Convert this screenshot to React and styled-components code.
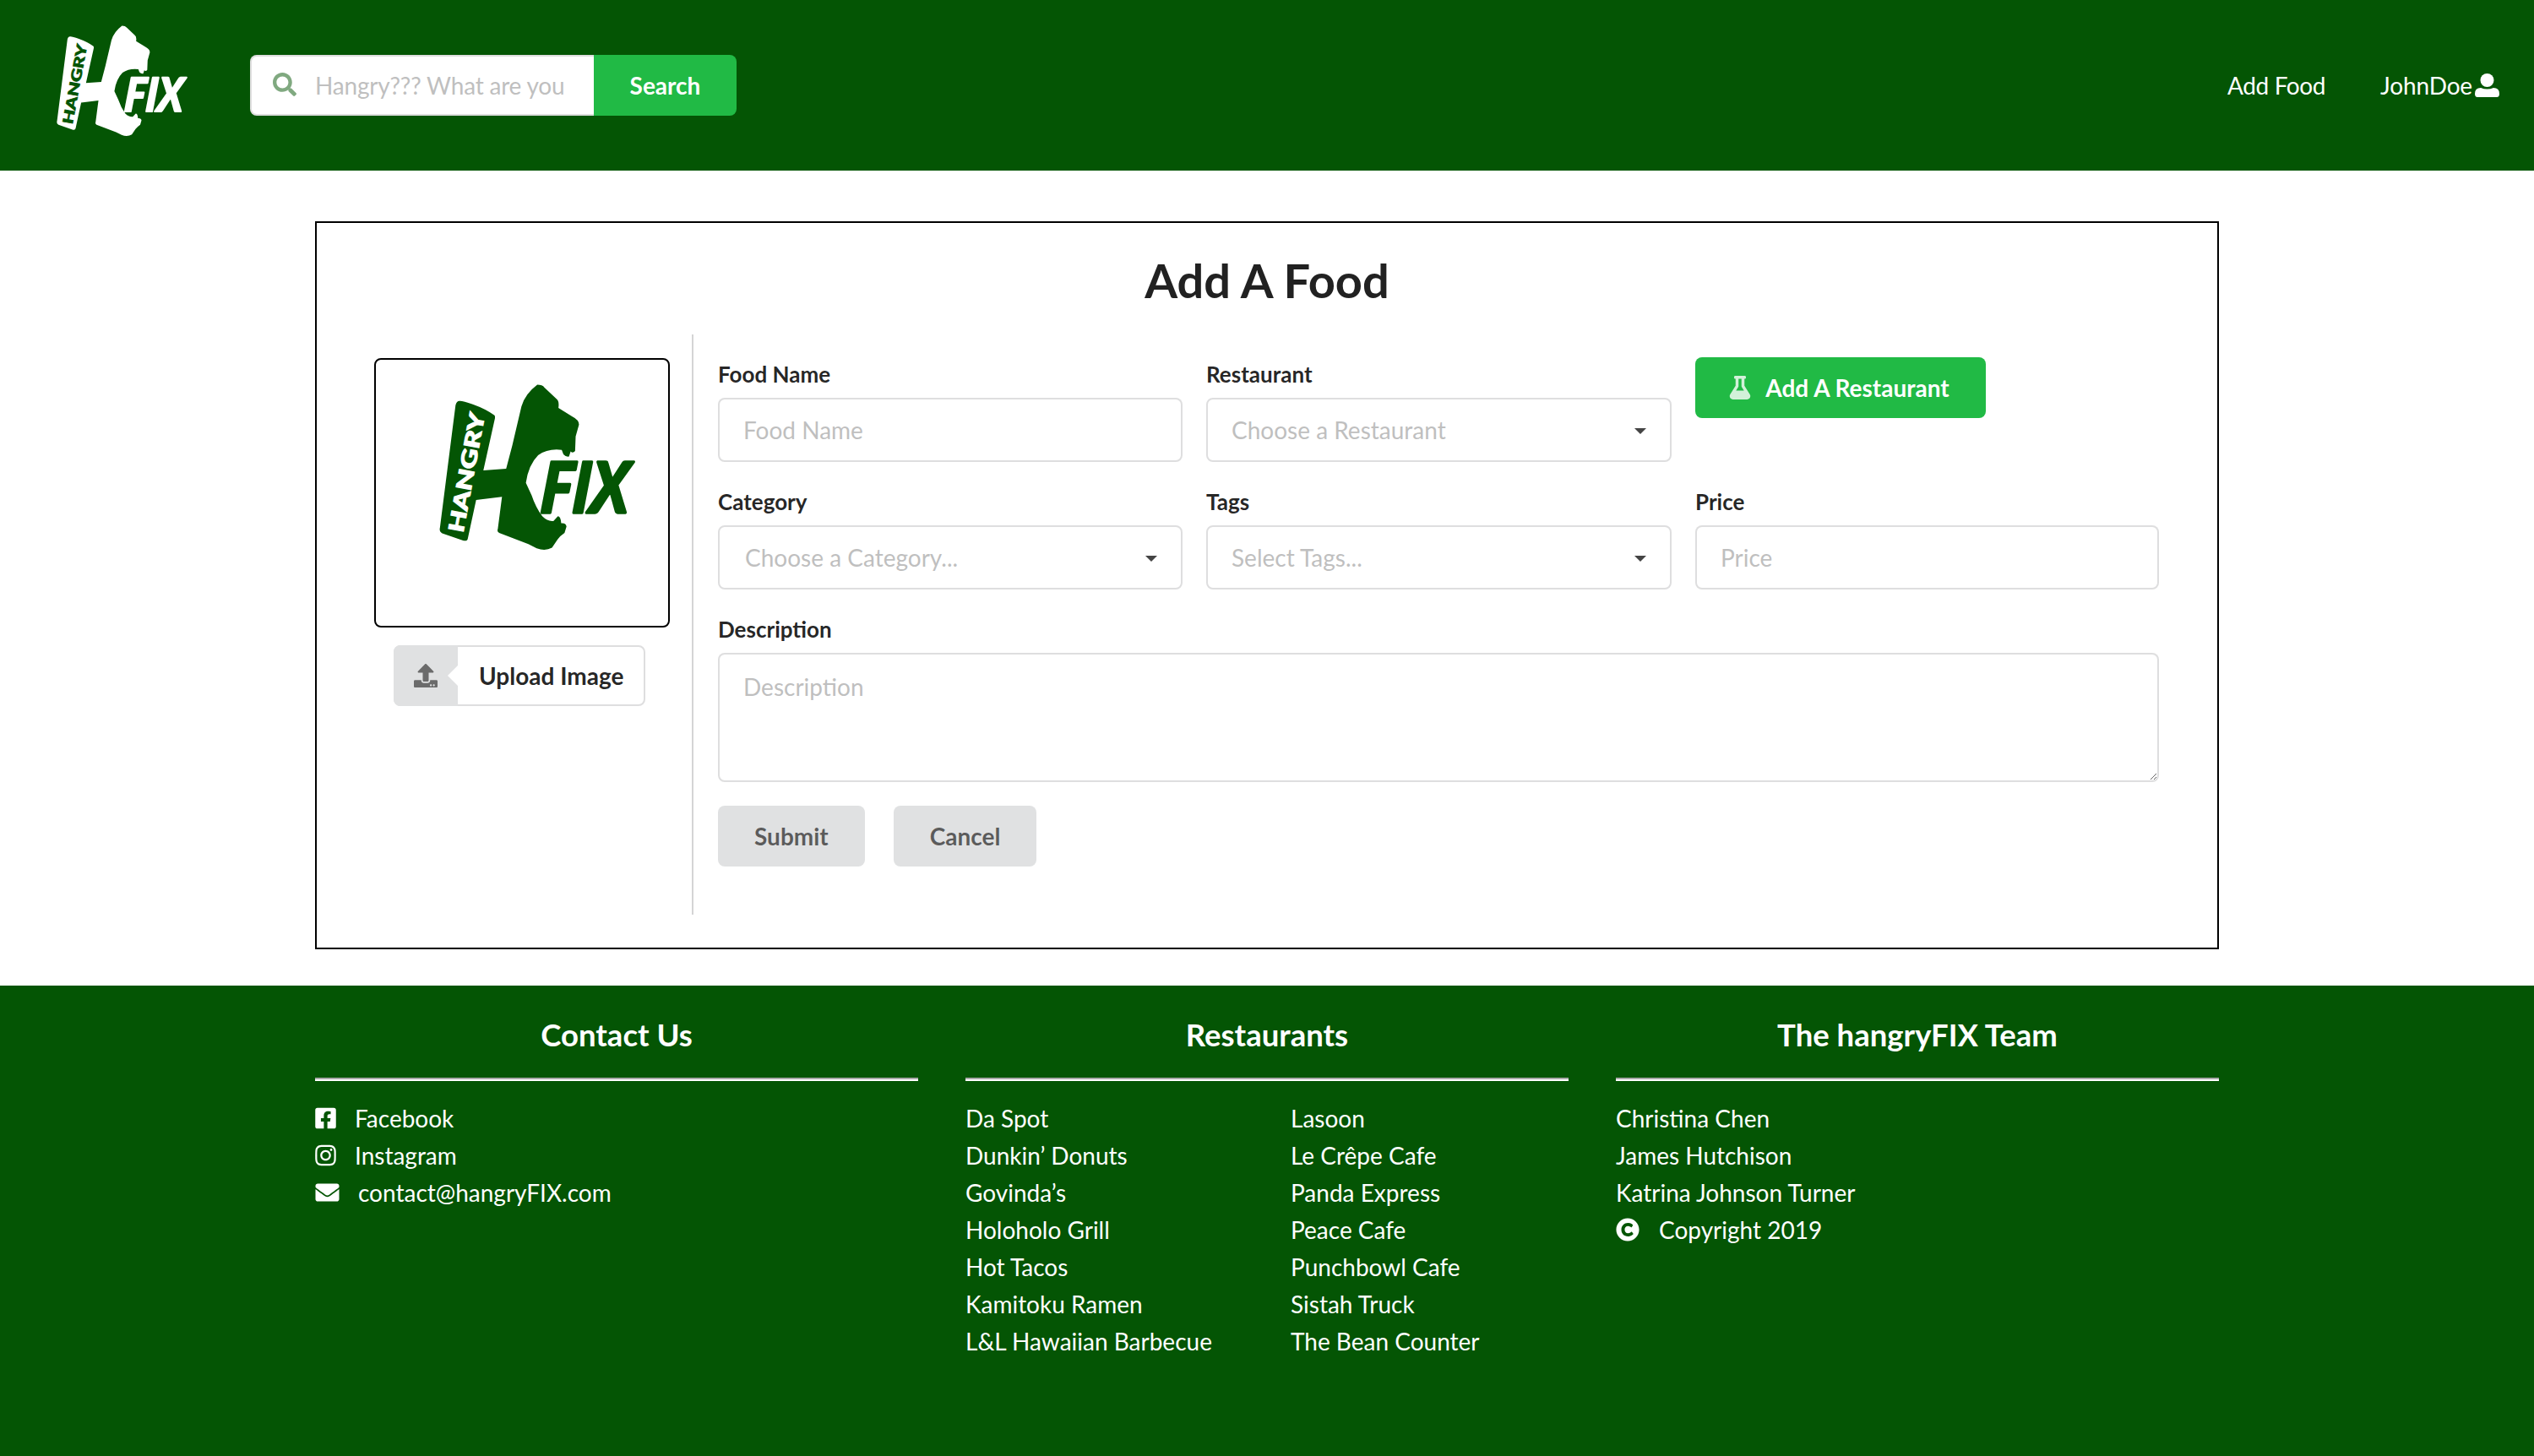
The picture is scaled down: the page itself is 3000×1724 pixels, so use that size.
import React from "react";
import styled, { createGlobalStyle } from "styled-components";
import { FaSearch, FaFlask, FaUpload, FaFacebookSquare, FaInstagram, FaEnvelope, FaCopyright } from "react-icons/fa";

const Global = createGlobalStyle`
  html, body { margin: 0; padding: 0; background: #fff; }
  body { font-family: Lato, "Liberation Sans", sans-serif; font-size: 28px; line-height: 40px; color: rgba(0,0,0,.87); }
  * { box-sizing: border-box; }
  input::placeholder, textarea::placeholder { color: #bfbfbf; opacity: 1; }
`;

const GREEN = "#045504";

const Page = styled.div`
  width: 3000px;
  height: 1724px;
  display: flex;
  flex-direction: column;
  overflow: hidden;
`;

/* Header */
const Header = styled.header`
  height: 202px;
  flex: none;
  background: ${GREEN};
  display: flex;
  align-items: center;
  padding: 0 41px 0 66px;
`;
const HeaderLogo = styled.svg`
  width: 167px;
  height: 132px;
  flex: none;
  margin: 0 63px 10px 0;
`;
const SearchBox = styled.form`
  display: flex;
  height: 72px;
  margin: 0;
`;
const SearchField = styled.div`
  width: 407px;
  height: 72px;
  background: #fff;
  border-radius: 8px 0 0 8px;
  position: relative;
  display: flex;
  align-items: center;
`;
const SearchIcon = styled(FaSearch)`
  position: absolute;
  left: 27px;
  top: 21px;
  width: 28px;
  height: 28px;
  color: ${GREEN};
  opacity: .5;
`;
const SearchInput = styled.input`
  width: 100%;
  height: 100%;
  border: 2px solid rgba(34,36,38,.15);
  border-right: none;
  border-radius: 8px 0 0 8px;
  padding: 0 28px 0 75px;
  font: 400 28px Lato, sans-serif;
  letter-spacing: -.2px;
  background: transparent;
  outline: none;
`;
const GreenButton = styled.button`
  background: #21ba45;
  color: #fff;
  border: none;
  font: 700 28px Lato, sans-serif;
  height: 72px;
  padding: 0;
`;
const SearchButton = styled(GreenButton)`
  width: 169px;
  border-radius: 0 8px 8px 0;
`;
const Spacer = styled.div`
  flex: 1;
`;
const NavLink = styled.a`
  color: #fff;
  display: flex;
  align-items: center;
  margin-left: ${p => p.$gap}px;
  line-height: 40px;
  letter-spacing: ${p => p.$track || 0}px;
`;
const UserIcon = styled.svg`
  width: 29px;
  height: 28px;
  margin: 0 0 0 3px;
`;

/* Card */
const Main = styled.main`
  flex: none;
  height: 965px;
  padding-top: 60px;
`;
const Card = styled.section`
  width: 2254px;
  height: 862px;
  margin: 0 auto;
  border: 2px solid #000;
  padding: 0 68px 0 68px;
`;
const Title = styled.h2`
  margin: 0;
  font: 700 56px/64px Lato, sans-serif;
  text-align: center;
  height: 132px;
  padding-top: 36px;
  color: rgba(0,0,0,.87);
`;
const CardBody = styled.div`
  display: flex;
  height: 687px;
`;
const ImageColumn = styled.div`
  width: 350px;
  flex: none;
  margin-right: 26px;
  padding-top: 28px;
  display: flex;
  flex-direction: column;
  align-items: center;
`;
const ImageFrame = styled.div`
  width: 350px;
  height: 319px;
  border: 2px solid #000;
  border-radius: 8px;
  background: #fff;
`;
const ImageLogo = styled.svg`
  display: block;
  width: 100%;
  height: 100%;
`;
const UploadButton = styled.div`
  margin-top: 21px;
  width: 298px;
  height: 72px;
  border: 2px solid rgba(34,36,38,.15);
  border-radius: 8px;
  display: flex;
  align-items: center;
  margin-right: 6px;
  font-weight: 700;
  position: relative;
`;
const UploadIconBox = styled.div`
  width: 76px;
  height: 72px;
  margin: -2px 0 -2px -2px;
  background: #e0e1e2;
  border-radius: 8px 0 0 8px;
  color: #6b6b6b;
  display: flex;
  align-items: center;
  justify-content: center;
  position: relative;
  &::after {
    content: "";
    position: absolute;
    right: 0;
    top: 24px;
    border: 12px solid transparent;
    border-left: 0;
    border-right: 12px solid #fff;
  }
`;
const UploadLabel = styled.span`
  margin-left: 25px;
`;
const FormColumn = styled.div`
  flex: 1;
  border-left: 2px solid #d4d4d5;
  padding: 32px 0 0 29px;
`;
const FieldRow = styled.div`
  display: grid;
  grid-template-columns: 550px 551px 549px;
  column-gap: 28px;
  margin-bottom: 32px;
`;
const Field = styled.div`
  display: flex;
  flex-direction: column;
`;
const Label = styled.label`
  font: 700 26px/30px Lato, sans-serif;
  margin-bottom: 13px;
  height: 30px;
  color: rgba(0,0,0,.87);
`;
const TextInput = styled.input`
  height: 76px;
  border: 2px solid rgba(34,36,38,.15);
  border-radius: 8px;
  padding: 0 28px;
  font: 400 28px Lato, sans-serif;
  width: 100%;
  outline: none;
`;
const SelectBox = styled.div`
  height: 76px;
  border: 2px solid rgba(34,36,38,.15);
  border-radius: 8px;
  padding: 0 ${p => p.$pad}px;
  color: #bfbfbf;
  display: flex;
  align-items: center;
  justify-content: space-between;
  padding-right: 28px;
`;
const Caret = styled.span`
  width: 0;
  height: 0;
  border-left: 7px solid transparent;
  border-right: 7px solid transparent;
  border-top: 7px solid #444;
  margin-top: 2px;
`;
const AddRestaurant = styled(GreenButton)`
  width: 344px;
  border-radius: 8px;
  display: flex;
  align-items: center;
  justify-content: center;
  gap: 16px;
  margin-top: -5px;
  padding-right: 4px;
  svg { width: 28px; height: 28px; opacity: .8; }
`;
const TextArea = styled.textarea`
  width: 1706px;
  height: 153px;
  border: 2px solid rgba(34,36,38,.15);
  border-radius: 8px;
  padding: 18px 28px;
  font: 400 28px/40px Lato, sans-serif;
  resize: vertical;
  outline: none;
  display: block;
`;
const Actions = styled.div`
  display: flex;
  gap: 34px;
  margin-top: 28px;
`;
const GreyButton = styled.button`
  height: 72px;
  padding: 0 43px;
  border: none;
  border-radius: 8px;
  background: #e0e1e2;
  color: rgba(0,0,0,.6);
  font: 700 28px Lato, sans-serif;
`;

/* Footer */
const Footer = styled.footer`
  flex: 1;
  background: ${GREEN};
  color: #fff;
  display: grid;
  grid-template-columns: repeat(3, 714px);
  column-gap: 56px;
  justify-content: center;
  padding-top: 36px;
  align-content: start;
`;
const FooterHeading = styled.h3`
  margin: 0;
  font: 700 36.5px/44px Lato, sans-serif;
  text-align: center;
`;
const Rule = styled.div`
  height: 4px;
  margin: 29px 0 22px;
  background: linear-gradient(#aaa 50%, #fff 50%);
`;
const ListColumns = styled.div`
  display: flex;
`;
const List = styled.ul`
  list-style: none;
  margin: 0;
  padding: 0;
  width: ${p => p.$width || "auto"};
`;
const Item = styled.li`
  height: 44px;
  line-height: 44px;
  display: flex;
  align-items: center;
  white-space: nowrap;
  svg { flex: none; width: ${p => p.$icon || 25}px; height: 28px; margin-right: ${p => p.$gap || 22}px; }
`;

function LogoArt({ fg, cut }) {
  return (
    <>
      <path
        fill={fg}
        d="M192 130 Q200 128 240 142 Q290 160 318 182 Q322 188 318 200 L278 380 L360 374 L382 290 L415 150 Q428 105 472 72 Q490 72 498 82 L540 122 Q552 130 548 155 L598 186 Q622 198 622 215 L610 258 L608 310 Q600 320 592 312 L586 330 Q575 332 566 322 L560 306 Q510 300 475 325 Q440 360 431 425 L452 470 Q465 510 490 545 Q510 565 530 562 L546 545 Q556 545 558 570 Q575 568 577 582 L570 605 Q555 615 545 628 L525 658 Q500 672 470 660 L440 645 L335 605 Q326 600 330 590 L345 475 L252 486 L222 625 Q220 636 205 632 L130 606 Q118 600 122 585 L178 145 Q182 130 192 130 Z"
      />
      <text
        x="0"
        y="0"
        transform="translate(205 606) rotate(-79.5)"
        fill={cut}
        stroke={cut}
        strokeWidth="3"
        fontFamily="Lato, sans-serif"
        fontWeight="900"
        fontSize="76"
        textLength="436"
        lengthAdjust="spacingAndGlyphs"
      >
        HANGRY
      </text>
      <text
        x="0"
        y="0"
        transform="translate(480 532) skewX(-5)"
        fill={fg}
        stroke={fg}
        strokeWidth="10"
        strokeLinejoin="round"
        fontFamily="Lato, sans-serif"
        fontWeight="900"
        fontStyle="italic"
        fontSize="252"
        textLength="316"
        lengthAdjust="spacingAndGlyphs"
      >
        FIX
      </text>
    </>
  );
}

const left = ["Da Spot", "Dunkin’ Donuts", "Govinda’s", "Holoholo Grill", "Hot Tacos", "Kamitoku Ramen", "L&L Hawaiian Barbecue"];
const right = ["Lasoon", "Le Crêpe Cafe", "Panda Express", "Peace Cafe", "Punchbowl Cafe", "Sistah Truck", "The Bean Counter"];

export default function App() {
  return (
    <Page>
      <Global />
      <Header>
        <HeaderLogo viewBox="115 70 760 600">
          <LogoArt fg="#fff" cut={GREEN} />
        </HeaderLogo>
        <SearchBox>
          <SearchField>
            <SearchIcon />
            <SearchInput placeholder="Hangry??? What are you" />
          </SearchField>
          <SearchButton type="button">Search</SearchButton>
        </SearchBox>
        <Spacer />
        <NavLink $gap={0} $track={-0.4}>Add Food</NavLink>
        <NavLink $gap={65} $track={-0.15}>
          JohnDoe
          <UserIcon viewBox="0 0 29 28">
            <circle cx="14.5" cy="8" r="8" fill="#fff" />
            <path d="M0 24 Q0 17 7 17 Q14.5 20 22 17 Q29 17 29 24 Q29 28 26 28 L3 28 Q0 28 0 24 Z" fill="#fff" />
          </UserIcon>
        </NavLink>
      </Header>
      <Main>
        <Card>
          <Title>Add A Food</Title>
          <CardBody>
            <ImageColumn>
              <ImageFrame>
                <ImageLogo viewBox="-108 -18 1050 957">
                  <LogoArt fg={GREEN} cut="#fff" />
                </ImageLogo>
              </ImageFrame>
              <UploadButton>
                <UploadIconBox>
                  <FaUpload size={28} />
                </UploadIconBox>
                <UploadLabel>Upload Image</UploadLabel>
              </UploadButton>
            </ImageColumn>
            <FormColumn>
              <FieldRow>
                <Field>
                  <Label>Food Name</Label>
                  <TextInput placeholder="Food Name" />
                </Field>
                <Field>
                  <Label>Restaurant</Label>
                  <SelectBox $pad={28}>Choose a Restaurant<Caret /></SelectBox>
                </Field>
                <Field>
                  <AddRestaurant type="button"><FaFlask />Add A Restaurant</AddRestaurant>
                </Field>
              </FieldRow>
              <FieldRow>
                <Field>
                  <Label>Category</Label>
                  <SelectBox $pad={30}>Choose a Category...<Caret /></SelectBox>
                </Field>
                <Field>
                  <Label>Tags</Label>
                  <SelectBox $pad={28}>Select Tags...<Caret /></SelectBox>
                </Field>
                <Field>
                  <Label>Price</Label>
                  <TextInput placeholder="Price" />
                </Field>
              </FieldRow>
              <Field>
                <Label>Description</Label>
                <TextArea placeholder="Description" />
              </Field>
              <Actions>
                <GreyButton type="button">Submit</GreyButton>
                <GreyButton type="button">Cancel</GreyButton>
              </Actions>
            </FormColumn>
          </CardBody>
        </Card>
      </Main>
      <Footer>
        <div>
          <FooterHeading>Contact Us</FooterHeading>
          <Rule />
          <List>
            <Item><FaFacebookSquare />Facebook</Item>
            <Item><FaInstagram />Instagram</Item>
            <Item $icon={29} $gap={22}><FaEnvelope />contact@hangryFIX.com</Item>
          </List>
        </div>
        <div>
          <FooterHeading>Restaurants</FooterHeading>
          <Rule />
          <ListColumns>
            <List $width="385px">{left.map(n => <Item key={n}>{n}</Item>)}</List>
            <List>{right.map(n => <Item key={n}>{n}</Item>)}</List>
          </ListColumns>
        </div>
        <div>
          <FooterHeading>The hangryFIX Team</FooterHeading>
          <Rule />
          <List>
            <Item>Christina Chen</Item>
            <Item>James Hutchison</Item>
            <Item>Katrina Johnson Turner</Item>
            <Item $icon={28} $gap={23}><FaCopyright />Copyright 2019</Item>
          </List>
        </div>
      </Footer>
    </Page>
  );
}
